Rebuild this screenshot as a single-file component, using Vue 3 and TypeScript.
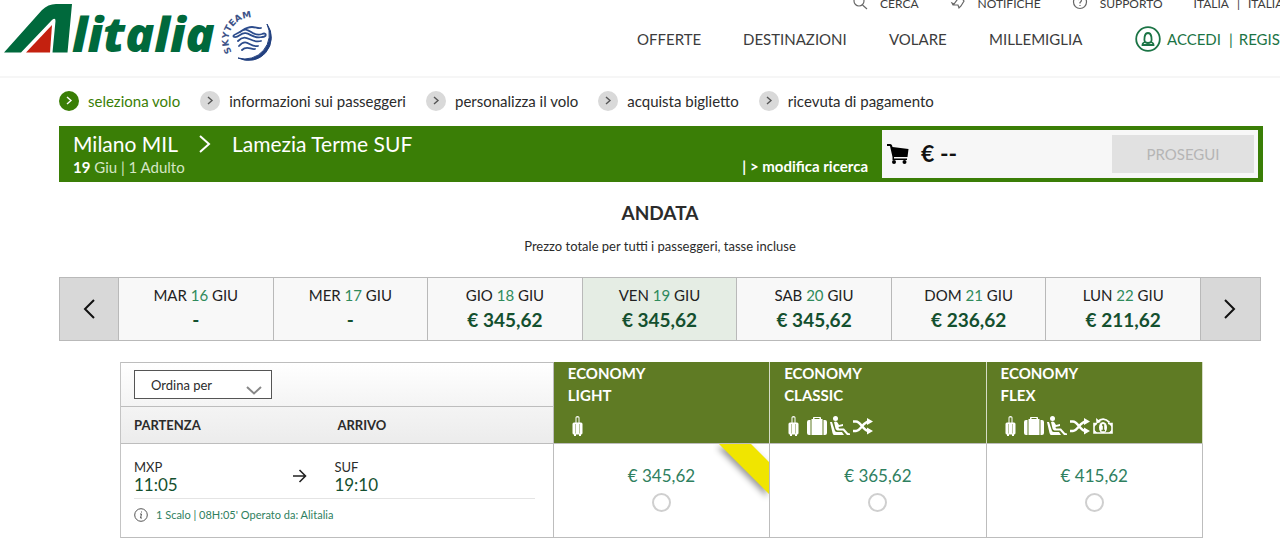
<script setup lang="ts">
import { ref } from 'vue'

type IconName = 'trolley' | 'suitcase' | 'seat' | 'change' | 'refund'

interface Day {
  weekday: string
  day: number
  price: string
}

interface Fare {
  id: string
  name: string
  price: string
  services: IconName[]
  promo: boolean
}

const mainLinks: string[] = ['OFFERTE', 'DESTINAZIONI', 'VOLARE', 'MILLEMIGLIA']

const steps: string[] = [
  'seleziona volo',
  'informazioni sui passeggeri',
  'personalizza il volo',
  'acquista biglietto',
  'ricevuta di pagamento',
]

const days: Day[] = [
  { weekday: 'MAR', day: 16, price: '-' },
  { weekday: 'MER', day: 17, price: '-' },
  { weekday: 'GIO', day: 18, price: '€ 345,62' },
  { weekday: 'VEN', day: 19, price: '€ 345,62' },
  { weekday: 'SAB', day: 20, price: '€ 345,62' },
  { weekday: 'DOM', day: 21, price: '€ 236,62' },
  { weekday: 'LUN', day: 22, price: '€ 211,62' },
]

const fares: Fare[] = [
  { id: 'light', name: 'LIGHT', price: '€ 345,62', services: ['trolley'], promo: true },
  { id: 'classic', name: 'CLASSIC', price: '€ 365,62', services: ['trolley', 'suitcase', 'seat', 'change'], promo: false },
  { id: 'flex', name: 'FLEX', price: '€ 415,62', services: ['trolley', 'suitcase', 'seat', 'change', 'refund'], promo: false },
]

const selectedDay = ref<number>(19)
const selectedFare = ref<string>('')
</script>

<template>
  <div class="page">
    <header class="header">
      <a class="logo" href="#" aria-label="Alitalia, SkyTeam">
        <svg width="280" height="66" viewBox="0 0 280 66" aria-hidden="true">
          <path d="M4 52.500 L42 10 Q48 4 56 4 H72 L67.500 52.500 H52.500 L55.500 21 Q55.500 17 52 20 L21 52.500 Z" fill="#00693c" />
          <path d="M26 52.500 L52 25 L50 52.500 Z" fill="#c4210f" />
          <text class="wordmark" x="72" y="52">litalia</text>
          <path id="skyteam-arc" d="M232 52 A22 22 0 0 1 270 28" fill="none" />
          <text class="alliance"><textPath href="#skyteam-arc">SKYTEAM</textPath></text>
          <path d="M267 24 A23 23 0 0 1 238 58 A24.500 24.500 0 0 0 267 24 Z" fill="#22407f" stroke="#22407f" stroke-width="1" />
          <g fill="none" stroke="#2c4c8c" stroke-width="1.800" stroke-linecap="round">
            <path d="M240 32 C249 24 251 38 262 34 C267 32 267 37 262 37 C252 40 248 29 240 35 C234 39 231 36 236 34 C243 31 245 27 252 27 C256 27 258 29 261 28" />
            <path d="M238 41 C247 32 250 44 261 41" />
            <path d="M239 46 C247 37 250 48 258 46" />
            <path d="M242 50 C247 45 251 50 255 49" />
          </g>
        </svg>
      </a>

      <div class="menus">
        <nav class="utility" aria-label="Servizi">
          <a href="#">
            <svg width="16" height="16" viewBox="0 0 16 16" class="line-icon"><circle cx="7" cy="6" r="5" /><path d="M10.500 10 L15 14" /></svg>
            CERCA
          </a>
          <a href="#">
            <svg width="16" height="16" viewBox="0 0 16 16" class="line-icon"><path d="M2 8 L4 9 L10 1 L14 6 L11 11 L9 13 L8 10 L3 10 Z" /></svg>
            NOTIFICHE
          </a>
          <a href="#">
            <svg width="16" height="16" viewBox="0 0 16 16" class="line-icon"><circle cx="8" cy="7" r="6.500" /><path d="M6 5 Q8 2.500 9.500 5 Q9.500 6.500 8 7.500 V8.500 M8 10 V11" /></svg>
            SUPPORTO
          </a>
          <a href="#">ITALIA</a>
          <span class="sep">|</span>
          <a href="#">ITALIANO</a>
        </nav>

        <nav class="main-nav" aria-label="Principale">
          <a v-for="link in mainLinks" :key="link" href="#">{{ link }}</a>
          <span class="account">
            <svg width="26" height="26" viewBox="0 0 26 26" fill="none" stroke="#1b7445" stroke-width="1.800" aria-hidden="true">
              <circle cx="13" cy="13" r="11.800" />
              <path d="M10 16 C9 14 9 7 13 7 C17 7 17 14 16 16 C17.500 16.500 18.500 17 18.500 19 H7.500 C7.500 17 8.500 16.500 10 16 Q13 18 16 16" />
            </svg>
            <a href="#">ACCEDI</a>
            <span class="sep">|</span>
            <a href="#">REGISTRATI</a>
          </span>
        </nav>
      </div>
    </header>

    <main class="content">
      <ol class="steps">
        <li v-for="(step, i) in steps" :key="step" :class="{ current: i === 0 }">
          <span class="bullet">
            <svg width="8" height="10" viewBox="0 0 8 10" aria-hidden="true"><path d="M2 1 L6 4.500 L2 8" /></svg>
          </span>
          {{ step }}
        </li>
      </ol>

      <section class="summary">
        <div class="trip">
          <h1 class="route">
            <span>Milano MIL</span>
            <svg width="12" height="20" viewBox="0 0 12 20" aria-hidden="true"><path d="M1 2 L10 10 L1 18" fill="none" stroke="#fff" stroke-width="2" /></svg>
            <span>Lamezia Terme SUF</span>
          </h1>
          <p class="details"><b>19</b> Giu | 1 Adulto</p>
        </div>
        <a class="edit" href="#">| &gt; modifica ricerca</a>
        <div class="cart">
          <svg width="22" height="20" viewBox="0 0 22 20" aria-hidden="true">
            <path d="M0 0 H3 Q5 0 5.500 3 L21.500 5 L20.500 13 H7 V14.500 H20 V16 H5.500 V13 L3 2 H0 Z" />
            <circle cx="7" cy="18" r="2" /><circle cx="17.500" cy="18" r="2" />
          </svg>
          <span class="total">€ --</span>
          <button class="proceed" type="button" disabled>PROSEGUI</button>
        </div>
      </section>

      <section class="outbound">
        <h2>ANDATA</h2>
        <p>Prezzo totale per tutti i passeggeri, tasse incluse</p>

        <div class="days">
          <button class="arrow" type="button" aria-label="Giorni precedenti">
            <svg width="12" height="20" viewBox="0 0 12 20"><path d="M11 1 L2 10 L11 19" /></svg>
          </button>
          <button
            v-for="d in days"
            :key="d.day"
            type="button"
            class="day"
            :class="{ selected: d.day === selectedDay }"
            @click="selectedDay = d.day"
          >
            <span class="date">{{ d.weekday }} <em>{{ d.day }}</em> GIU</span>
            <strong>{{ d.price }}</strong>
          </button>
          <button class="arrow" type="button" aria-label="Giorni successivi">
            <svg width="12" height="20" viewBox="0 0 12 20"><path d="M1 1 L10 10 L1 19" /></svg>
          </button>
        </div>

        <table class="flights">
          <colgroup>
            <col class="col-leg" /><col class="col-leg" />
            <col v-for="f in fares" :key="f.id" class="col-fare" />
          </colgroup>
          <thead>
            <tr class="tools">
              <td colspan="2">
                <div class="sort">
                  <select aria-label="Ordina per">
                    <option>Ordina per</option>
                  </select>
                  <svg width="16" height="9" viewBox="0 0 16 9" aria-hidden="true"><path d="M1 1 L8 7.500 L15 1" /></svg>
                </div>
              </td>
              <th v-for="f in fares" :key="f.id" rowspan="2" scope="col" class="fare-head">
                <span>ECONOMY</span>
                <span>{{ f.name }}</span>
                <div class="services">
                  <template v-for="s in f.services" :key="s">
                    <svg v-if="s === 'trolley'" width="20" height="20" viewBox="0 0 20 20" fill="#fff" aria-hidden="true">
                      <path d="M7.500 7 V1.500 Q7.500 0 9.500 0 Q11.500 0 11.500 1.500 V7 H10.500 V1.500 H8.500 V7 Z" />
                      <rect x="4.500" y="6.500" width="10" height="12" rx="1.500" />
                      <path d="M7.500 8 V17.500 M11.500 8 V17.500" stroke="#a8b785" stroke-width="0.800" />
                      <rect x="6" y="18" width="2" height="2" /><rect x="11" y="18" width="2" height="2" />
                    </svg>
                    <svg v-else-if="s === 'suitcase'" width="20" height="20" viewBox="0 0 20 20" fill="#fff" aria-hidden="true">
                      <path d="M6 3 V1.500 Q6 1 7 1 H13 Q14 1 14 1.500 V3 H15.500 V19 H4.500 V3 Z M7.500 3 H12.500 V2 H7.500 Z" fill-rule="evenodd" />
                      <path d="M3.500 4 V19 H2 Q0 19 0 17 V6 Q0 4 2 4 Z M16.500 4 V19 H18 Q20 19 20 17 V6 Q20 4 18 4 Z" />
                    </svg>
                    <svg v-else-if="s === 'seat'" width="20" height="20" viewBox="0 0 20 20" fill="#fff" aria-hidden="true">
                      <circle cx="5.500" cy="2.500" r="2.500" />
                      <path d="M4 6 Q6 5 7.500 6.500 L9 9 L13 8 V10 L8.500 11 L9 12.500 H14 L18 17 L20 17.500 V19 H17 L13 14.500 H7.500 Q6 14 5.500 12.500 Z" />
                      <path d="M0 6 H2 L5 15 Q5.500 16 7 16 H12 L14 19 H4 Q3 19 2.500 17 Z" />
                    </svg>
                    <svg v-else-if="s === 'change'" width="20" height="20" viewBox="0 0 20 20" aria-hidden="true">
                      <path d="M0 5.500 H3 C8 5.500 10 15 16 15 M0 15 H3 C8 15 10 5.500 16 5.500" fill="none" stroke="#fff" stroke-width="2.500" />
                      <path d="M14 2 L20 5.500 L14 9 Z M14 11.500 L20 15 L14 18.500 Z" fill="#fff" />
                    </svg>
                    <svg v-else width="20" height="20" viewBox="0 0 20 20" aria-hidden="true">
                      <path d="M4.500 6 Q10 0 16.500 6.500" fill="none" stroke="#fff" stroke-width="1.800" />
                      <path d="M3 2 L3.500 7.500 L8 6 Z" fill="#fff" />
                      <path d="M4 7.500 H1 V17 H19 V7.500 H15" fill="none" stroke="#fff" stroke-width="1.600" />
                      <path d="M1 11 L4.500 7.500 H1 Z M15.500 7.500 L19 11 V7.500 Z M1 13.500 L4.500 17 H1 Z M19 13.500 L15.500 17 H19 Z" fill="#fff" />
                      <ellipse cx="10" cy="11.500" rx="4" ry="5.500" fill="#fff" />
                      <path d="M9 9 H10.500 V14.500 M8.500 14.500 H12" stroke="#5f7b24" stroke-width="1.400" fill="none" />
                    </svg>
                  </template>
                </div>
              </th>
            </tr>
            <tr class="leg-head">
              <th scope="col">PARTENZA</th>
              <th scope="col">ARRIVO</th>
            </tr>
          </thead>
          <tbody>
            <tr>
              <td colspan="2" class="flight">
                <div class="legs">
                  <div class="leg departure">
                    <div>
                      <span class="airport">MXP</span>
                      <span class="time">11:05</span>
                    </div>
                    <svg width="14" height="14" viewBox="0 0 14 14" aria-hidden="true"><path d="M0 7 H12.500 M6.500 1 L12.500 7 L6.500 13" /></svg>
                  </div>
                  <div class="leg">
                    <div>
                      <span class="airport">SUF</span>
                      <span class="time">19:10</span>
                    </div>
                  </div>
                </div>
                <a class="info" href="#">
                  <svg width="14" height="14" viewBox="0 0 14 14" aria-hidden="true">
                    <circle cx="7" cy="7" r="6.300" />
                    <path d="M6 6 H7.500 L6.500 10 H8 M7.500 3.500 V4.500" />
                  </svg>
                  1 Scalo | 08H:05' Operato da: Alitalia
                </a>
              </td>
              <td v-for="f in fares" :key="f.id" class="fare">
                <svg v-if="f.promo" class="ribbon" width="56" height="62" viewBox="0 0 56 62" aria-hidden="true">
                  <path d="M6 0 H38 L56 18 V50 Z" fill="#f0e500" />
                </svg>
                <label>
                  {{ f.price }}
                  <input v-model="selectedFare" type="radio" name="fare" :value="f.id" />
                </label>
              </td>
            </tr>
          </tbody>
        </table>
      </section>
    </main>
  </div>
</template>

<style>
body {
  margin: 0;
  background: #fff;
}
</style>

<style scoped>
.page {
  overflow: hidden;
  font-family: Lato, "Liberation Sans", sans-serif;
  color: #2b2b2b;
  padding-bottom: 6px;
}

.page * {
  box-sizing: border-box;
}

a {
  color: inherit;
  text-decoration: none;
}

button {
  font-family: inherit;
  border: 0;
  padding: 0;
}

svg {
  display: block;
  flex: none;
}

/* header */
.header {
  display: flex;
  height: 78px;
  border-bottom: 2px solid #f6f6f6;
}

.logo {
  flex: 1 1 280px;
}

.wordmark {
  font: italic 800 48px "Open Sans", "Liberation Sans", sans-serif;
  fill: #00693c;
}

.alliance {
  font: 700 9px "DejaVu Sans", sans-serif;
  fill: #3d5388;
}

.menus {
  flex: 0 0 643px;
  min-width: 0;
  color: #3c3c3c;
  white-space: nowrap;
}

.utility {
  display: flex;
  align-items: center;
  height: 16px;
  margin-top: -5px;
  padding-left: 215px;
  font-size: 12px;
}

.utility a {
  display: flex;
  align-items: center;
  gap: 12px;
  margin-right: 31px;
}

.utility a:nth-of-type(n + 4) {
  margin-right: 8px;
}

.sep {
  margin-right: 8px;
}

.line-icon {
  fill: none;
  stroke: #666;
  stroke-width: 1.2;
}

.main-nav {
  display: grid;
  grid-template-columns: 106px 146px 100px 146px 1fr;
  align-items: center;
  height: 26px;
  margin-top: 15px;
  font-size: 15px;
}

.account {
  display: flex;
  align-items: center;
  color: #1b7445;
}

.account a {
  margin: 0 8px 0 6px;
}

.account .sep {
  margin: 0;
}

/* booking steps */
.content {
  padding: 0 17px 0 59px;
}

.steps {
  display: flex;
  gap: 20px;
  margin: 13px 0 15px;
  padding: 0;
  list-style: none;
  font-size: 15px;
  line-height: 20px;
  white-space: nowrap;
}

.steps li {
  display: flex;
  align-items: center;
  gap: 9px;
}

.bullet {
  display: grid;
  place-items: center;
  width: 20px;
  height: 20px;
  border-radius: 50%;
  background: #d9d9d9;
}

.bullet path {
  fill: none;
  stroke: #555;
  stroke-width: 1.4;
}

.current {
  color: #3a7e06;
}

.current .bullet {
  background: #3a7e06;
}

.current .bullet path {
  stroke: #fff;
}

/* trip summary */
.summary {
  display: flex;
  align-items: stretch;
  padding: 4px 5px 4px 14px;
  background: #3a7e06;
  color: #fff;
}

.trip {
  flex: 1;
}

.route {
  display: flex;
  align-items: center;
  gap: 21px;
  margin: 0;
  font-size: 21px;
  font-weight: 400;
  line-height: 28px;
}

.details {
  margin: 0;
  font-size: 15px;
  line-height: 18px;
  color: #d5e6c5;
}

.details b {
  color: #fff;
}

.edit {
  align-self: flex-end;
  margin-right: 14px;
  font-size: 15px;
  font-weight: 700;
  line-height: 24px;
}

.cart {
  display: flex;
  align-items: center;
  flex: 0 0 376px;
  height: 48px;
  padding: 0 4px 0 5px;
  background: #f7f7f7;
  color: #111;
}

.total {
  flex: 1;
  margin-left: 12px;
  padding-bottom: 2px;
  font-size: 23px;
  font-weight: 700;
}

.proceed {
  width: 142px;
  height: 38px;
  background: #e1e1e1;
  color: #b5b5b5;
  font-size: 15px;
}

/* outbound */
.outbound {
  padding-right: 2px;
  text-align: center;
}

h2 {
  margin: 17px 0 0;
  font-size: 19px;
  font-weight: 700;
  line-height: 28px;
}

.outbound p {
  margin: 10px 0 22px;
  font-size: 13px;
  line-height: 18px;
}

.days {
  display: grid;
  grid-template-columns: 59px repeat(7, 1fr) 59px;
  border: 1px solid #b9b9b9;
}

.arrow {
  display: grid;
  place-items: center;
  background: #d8d8d8;
}

.arrow path {
  fill: none;
  stroke: #111;
  stroke-width: 2;
}

.day {
  display: flex;
  flex-direction: column;
  height: 62px;
  padding-top: 6px;
  align-items: center;
  background: #f8f8f8;
  border-right: 1px solid #b9b9b9;
  color: #222;
  font-size: 15px;
  line-height: 22px;
}

.arrow:first-child {
  border-right: 1px solid #b9b9b9;
}

.day em {
  font-style: normal;
  color: #2f8a5b;
}

.day strong {
  font-size: 19px;
  line-height: 28px;
  color: #14502f;
}

.selected {
  background: #e5ede4;
}

/* flights */
.flights {
  width: calc(100% - 119px);
  margin: 21px 58px 0 61px;
  table-layout: fixed;
  border-collapse: separate;
  border-spacing: 0;
  border-left: 1px solid #c4c4c4;
  text-align: left;
}

.flights th,
.flights td {
  padding: 0;
}

.col-fare,
.col-leg {
  width: 20%;
}

.tools td {
  height: 45px;
  padding: 0 13px;
  border: 1px solid #bdbdbd;
  border-left: 0;
  background: linear-gradient(#fff, #f4f4f4);
}

.sort {
  position: relative;
  width: 138px;
}

.sort select {
  display: block;
  width: 100%;
  height: 29px;
  padding: 0 0 0 16px;
  appearance: none;
  border: 1px solid #555;
  border-radius: 0;
  background: #fff;
  color: #2b2b2b;
  font-family: inherit;
  font-size: 13px;
}

.sort svg {
  position: absolute;
  right: 10px;
  bottom: 4px;
  pointer-events: none;
}

.sort path {
  fill: none;
  stroke: #888;
  stroke-width: 2;
}

.leg-head th {
  height: 37px;
  padding-left: 13px;
  background: linear-gradient(#f4f4f4, #ececec);
  border-bottom: 1px solid #bdbdbd;
  font-size: 13px;
}

.leg-head th + th {
  padding-left: 0;
  border-right: 1px solid #bdbdbd;
}

.flights .fare-head {
  height: 82px;
  padding-left: 14px;
  vertical-align: top;
  background: #5f7b24;
  border-right: 1px solid #d5dcc6;
  border-bottom: 1px solid #bdbdbd;
  color: #fff;
  font-size: 15px;
  line-height: 22px;
}

.fare-head span {
  display: block;
}

.services {
  display: flex;
  gap: 3px;
  margin-top: 10px;
}

.flight,
.fare {
  border-right: 1px solid #bdbdbd;
  border-bottom: 1px solid #bdbdbd;
}

.flights .flight {
  height: 94px;
  padding: 13px 18px 12px 13px;
}

.legs {
  display: grid;
  grid-template-columns: 1fr 1fr;
  padding-bottom: 4px;
  border-bottom: 1px solid #e4e4e4;
}

.leg {
  display: flex;
  align-items: center;
}

.departure {
  justify-content: space-between;
  padding-right: 27px;
}

.leg path {
  fill: none;
  stroke: #222;
  stroke-width: 1.6;
}

.airport,
.time {
  display: block;
  line-height: 18px;
  font-size: 13px;
}

.time {
  font-size: 17px;
  color: #14502f;
}

.info {
  display: flex;
  align-items: center;
  gap: 8px;
  margin-top: 7px;
  font-size: 11px;
  line-height: 18px;
  color: #2f8060;
}

.info circle,
.info path {
  fill: none;
  stroke: #555;
  stroke-width: 1;
}

.flights .fare {
  position: relative;
  padding-bottom: 4px;
  text-align: center;
}

.fare label {
  display: block;
  font-size: 17px;
  line-height: 22px;
  color: #2f8060;
}

.fare input {
  display: block;
  width: 19px;
  height: 19px;
  margin: 6px auto 0;
  appearance: none;
  border: 2px solid #cfcfcf;
  border-radius: 50%;
  background: #fff;
}

.fare input:checked {
  border-color: #3a7e06;
  background: #3a7e06;
}

.ribbon {
  position: absolute;
  top: 0;
  right: 0;
}

.ribbon path {
  filter: drop-shadow(-2px 3px 3px rgba(0, 0, 0, 0.4));
}
</style>
